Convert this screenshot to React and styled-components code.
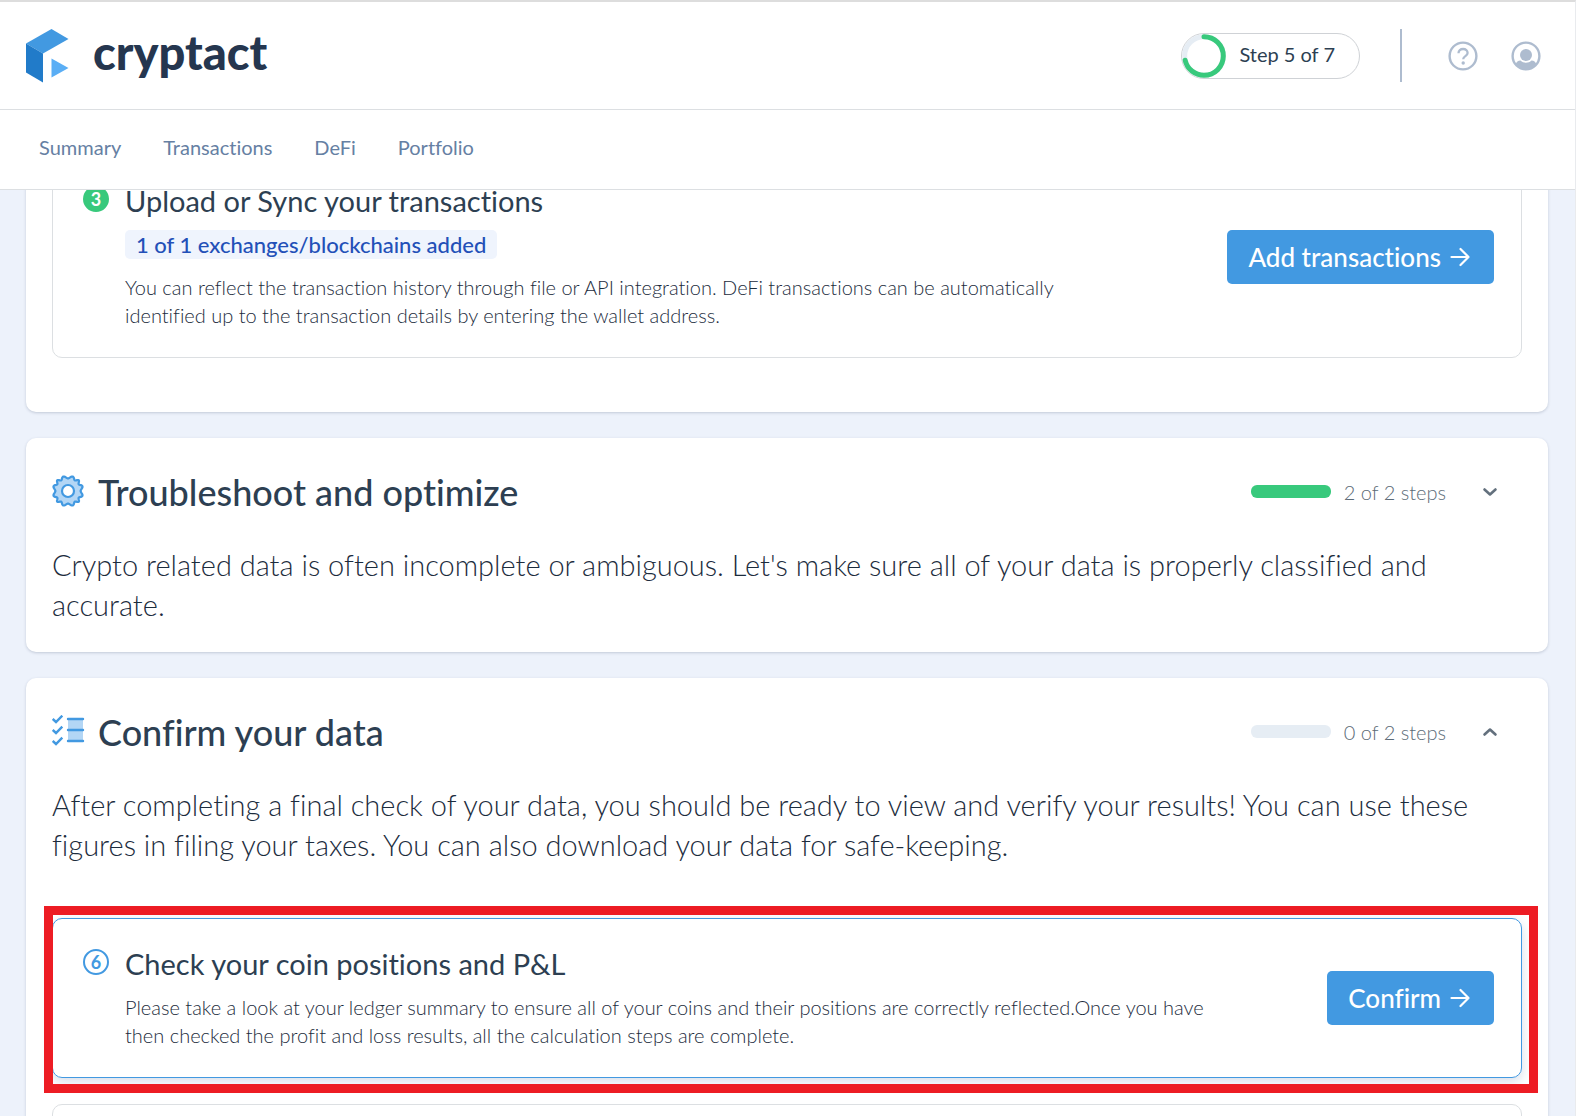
import React from 'react';
import styled, { createGlobalStyle } from 'styled-components';

const color = {
  ink: '#2d3f52',
  body: '#1c2c3d',
  brand: '#25364f',
  nav: '#6680a3',
  muted: '#5c6b77',
  blue: '#4299e1',
  green: '#38c97c',
  track: '#e6edf4',
  line: '#dcdfe2',
  slate: '#aebccf',
  page: '#edf2fb',
};

const GlobalStyle = createGlobalStyle`
  *, *::before, *::after { box-sizing: border-box; }
  html, body { margin: 0; }
  body {
    height: 100vh;
    overflow: hidden;
    background: ${color.page};
    color: ${color.ink};
    font-family: Lato, "Open Sans", "Liberation Sans", sans-serif;
    font-size: 20px;
    font-variant-ligatures: no-common-ligatures;
    line-height: 28px;
  }
  h2, h3, p { margin: 0; }
  button { font: inherit; color: inherit; border: 0; padding: 0; background: none; cursor: pointer; }
  a { color: inherit; text-decoration: none; }
  svg { display: block; flex: none; }
`;

const Page = styled.div`
  display: flex;
  flex-direction: column;
  height: 100vh;
  border-top: 2px solid #dddddd;
  border-right: 1px solid #e9ebee;
`;

const Header = styled.header`
  flex: none;
  display: flex;
  align-items: center;
  justify-content: space-between;
  height: 108px;
  padding: 0 34px 0 26px;
  background: #fff;
  border-bottom: 1px solid ${color.line};
`;

const Brand = styled.a`
  display: flex;
  align-items: center;
  gap: 24px;
`;

const BrandName = styled.span`
  padding-bottom: 8px;
  color: ${color.brand};
  font-size: 47px;
  font-weight: 900;
  line-height: 48px;
`;

const HeaderTools = styled.div`
  display: flex;
  align-items: center;
`;

const StepPill = styled.div`
  display: flex;
  align-items: center;
  gap: 13px;
  height: 46px;
  padding-right: 24px;
  border: 1px solid #cfd2d6;
  border-radius: 23px;
`;

const StepCount = styled.span`
  padding-bottom: 3px;
`;

const Divider = styled.span`
  width: 2px;
  height: 53px;
  margin: 0 46px 0 40px;
  background: ${color.slate};
`;

const IconButton = styled.button`
  display: grid;
  place-items: center;
  & + & { margin-left: 33px; }
`;

const Nav = styled.nav`
  flex: none;
  display: flex;
  align-items: center;
  gap: 42px;
  height: 80px;
  padding: 0 39px 5px;
  background: #fff;
  border-bottom: 1px solid ${color.line};
  color: ${color.nav};
`;

const Main = styled.main`
  flex: 1;
  min-height: 0;
  overflow: hidden;
`;

const CardList = styled.div`
  display: flex;
  flex-direction: column;
  gap: 26px;
  margin-top: -61px;
  padding: 0 27px 0 26px;
`;

const Card = styled.section`
  padding: 26px;
  background: #fff;
  border-radius: 10px;
  box-shadow: 0 1px 3px rgba(40, 60, 90, 0.22);
  ${(p) => p.$hasSteps && 'padding-bottom: 54px;'}
`;

const CardHeader = styled.div`
  display: flex;
  align-items: center;
  height: 55px;
  margin-bottom: 26px;
`;

const CardTitle = styled.h2`
  flex: 1;
  margin-left: 13px;
  font-size: 36px;
  font-weight: 500;
  line-height: 48px;
`;

const ProgressTrack = styled.div`
  width: 80px;
  height: 13px;
  border-radius: 6px;
  background: ${color.track};
  overflow: hidden;
`;

const ProgressFill = styled.div`
  height: 100%;
  background: ${color.green};
`;

const ProgressText = styled.span`
  margin-left: 13px;
  color: ${color.muted};
  font-weight: 300;
`;

const ToggleButton = styled.button`
  display: grid;
  place-items: center;
  width: 26px;
  height: 26px;
  margin: 0 19px 0 31px;
`;

const CardText = styled.p`
  padding-bottom: 1px;
  color: ${color.body};
  font-size: 29px;
  font-weight: 300;
  line-height: 40px;
`;

const StepList = styled.div`
  display: flex;
  flex-direction: column;
  gap: 26px;
  ${(p) => p.$afterText && 'margin-top: 52px;'}
`;

const Step = styled.article`
  position: relative;
  display: flex;
  align-items: center;
  justify-content: space-between;
  gap: 40px;
  min-height: 160px;
  padding: 26px 27px 26px 30px;
  border: 1px solid ${(p) => (p.$active ? color.blue : color.line)};
  border-radius: 10px;
  ${(p) => p.$active && 'box-shadow: 0 4px 12px rgba(60, 90, 150, 0.2);'}
`;

const StepInfo = styled.div`
  display: flex;
  align-items: flex-start;
  gap: 16px;
`;

const Badge = styled.span`
  flex: none;
  display: grid;
  place-items: center;
  width: 26px;
  height: 26px;
  margin-top: 4px;
  border-radius: 50%;
  border: 2px solid ${(p) => (p.$done ? color.green : color.blue)};
  background: ${(p) => (p.$done ? color.green : '#fff')};
  color: ${(p) => (p.$done ? '#fff' : color.blue)};
  font-size: 18px;
  font-weight: 700;
  line-height: 20px;
`;

const StepBody = styled.div`
  display: flex;
  flex-direction: column;
  align-items: flex-start;
`;

const StepTitle = styled.h3`
  margin-bottom: 10px;
  font-size: 29px;
  font-weight: 400;
  line-height: 38px;
`;

const Tag = styled.span`
  margin-bottom: 14px;
  padding: 0 11px;
  border-radius: 5px;
  background: #eff4fd;
  color: #2350b8;
  font-size: 22px;
  font-weight: 500;
  line-height: 29px;
`;

const StepText = styled.p`
  padding-bottom: 2px;
  color: ${color.body};
  font-weight: 300;
`;

const ActionButton = styled.button`
  flex: none;
  display: flex;
  align-items: center;
  gap: 9px;
  height: 54px;
  padding: 0 24px 0 21px;
  border-radius: 5px;
  background: ${color.blue};
  color: #fff;
  font-size: 26px;
  font-weight: 500;
`;

const Highlight = styled.div`
  position: absolute;
  inset: -13px -17px -16px -9px;
  border: 9px solid #ed1c24;
  pointer-events: none;
`;

const LogoMark = () => (
  <svg width="43" height="54" viewBox="0 0 43 54" aria-hidden="true">
    <path d="M0 14.5 25.5 0 42.500 10 17 24.500z" fill="#4299e1" />
    <path d="M0 14.500 17 24.500V53.500L0 43.500z" fill="#217bc9" />
    <path d="M25.500 29.500 42.500 39 25.500 48.500z" fill="#5aaef5" />
  </svg>
);

const ProgressRing = () => (
  <svg width="44" height="44" viewBox="0 0 44 44" fill="none" strokeWidth="5" aria-hidden="true">
    <circle cx="22" cy="22" r="19.300" stroke={color.track} />
    <circle
      cx="22" cy="22" r="19.300" stroke={color.green} strokeLinecap="round"
      pathLength="7" strokeDasharray="5 7" transform="rotate(-90 22 22)"
    />
  </svg>
);

const HelpIcon = () => (
  <svg width="30" height="30" viewBox="0 0 30 30" fill="none" stroke={color.slate} aria-hidden="true">
    <circle cx="15" cy="15" r="13.400" strokeWidth="2.400" />
    <path d="M10.500 12.300c0-2.600 2-4.300 4.600-4.300s4.500 1.700 4.500 4c0 3.200-4.400 3-4.400 6.200" strokeWidth="2.300" />
    <circle cx="15.200" cy="22" r="1.700" fill={color.slate} stroke="none" />
  </svg>
);

const UserIcon = () => (
  <svg width="30" height="30" viewBox="0 0 30 30" aria-hidden="true">
    <circle cx="15" cy="15" r="13.400" fill="none" stroke={color.slate} strokeWidth="2.400" />
    <circle cx="15" cy="14" r="6" fill={color.slate} />
    <path d="M4.500 23.500C5.500 21 7 19.600 9.500 19.600c1.500 1.500 3.400 2.200 5.500 2.200s4-.7 5.500-2.200c2.500 0 4 1.400 5 3.900-5 7-16 7-21 0z" fill={color.slate} />
  </svg>
);

const gearPath = (() => {
  const points = [];
  for (let i = 0; i < 144; i += 1) {
    const angle = (i / 144) * Math.PI * 2;
    const radius = 13.9 - 1.3 * Math.cos(angle * 12 - 0.66 * Math.sin(angle * 4));
    points.push(`${(16 + radius * Math.sin(angle)).toFixed(2)} ${(16 - radius * Math.cos(angle)).toFixed(2)}`);
  }
  return `M${points.join('L')}z`;
})();

const GearIcon = () => (
  <svg width="33" height="33" viewBox="0 0 33 33" stroke={color.blue} strokeWidth="2.200" aria-hidden="true">
    <path d={gearPath} fill="#b3d6f5" strokeLinejoin="round" />
    <circle cx="16" cy="16" r="6" fill="#fff" />
  </svg>
);

const ChecklistIcon = () => (
  <svg width="33" height="33" viewBox="0 0 33 33" fill="none" stroke={color.blue} strokeWidth="2.400" aria-hidden="true">
    <path d="M16 4h15v22H16z" fill="#b3d6f5" stroke="none" />
    <path d="M16 4h15M16 15h15M16 26h15" strokeLinecap="round" />
    <path d="M.7 4 4 7l6.300-6.300M.7 15 4 18l6.300-6.300M.7 26 4 29l6.300-6.300" />
  </svg>
);

const Chevron = ({ up }) => (
  <svg width="16" height="10" viewBox="0 0 16 10" fill="none" stroke="#63707d" strokeWidth="2.600" strokeLinecap="round" strokeLinejoin="round" aria-hidden="true">
    <path d={up ? 'M2.500 7.500 8 2.500l5.500 5' : 'M2.500 2.500 8 7.500l5.500-5'} />
  </svg>
);

const Arrow = () => (
  <svg width="20" height="20" viewBox="0 0 20 20" fill="none" stroke="#fff" strokeWidth="2.200" strokeLinecap="round" strokeLinejoin="round" aria-hidden="true">
    <path d="M1.500 10h17M10.500 2l8 8-8 8" />
  </svg>
);

const SectionHeader = ({ icon, title, done, total, open }) => (
  <CardHeader>
    {icon}
    <CardTitle>{title}</CardTitle>
    <ProgressTrack role="progressbar" aria-label={title} aria-valuenow={done} aria-valuemin={0} aria-valuemax={total}>
      <ProgressFill style={{ width: `${(done / total) * 100}%` }} />
    </ProgressTrack>
    <ProgressText>{done} of {total} steps</ProgressText>
    <ToggleButton type="button" aria-expanded={open} aria-label={`Toggle ${title}`}>
      <Chevron up={open} />
    </ToggleButton>
  </CardHeader>
);

const StepItem = ({ number, title, tag, action, done, active, children }) => (
  <Step $active={active}>
    <StepInfo>
      <Badge $done={done}>{number}</Badge>
      <StepBody>
        <StepTitle>{title}</StepTitle>
        {tag && <Tag>{tag}</Tag>}
        <StepText>{children}</StepText>
      </StepBody>
    </StepInfo>
    <ActionButton type="button">{action}<Arrow /></ActionButton>
    {active && <Highlight />}
  </Step>
);

export default function App() {
  return (
    <>
      <GlobalStyle />
      <Page>
        <Header>
          <Brand href="#"><LogoMark /><BrandName>cryptact</BrandName></Brand>
          <HeaderTools>
            <StepPill><ProgressRing /><StepCount>Step 5 of 7</StepCount></StepPill>
            <Divider />
            <IconButton type="button" aria-label="Help"><HelpIcon /></IconButton>
            <IconButton type="button" aria-label="Account"><UserIcon /></IconButton>
          </HeaderTools>
        </Header>
        <Nav>
          <a href="#summary">Summary</a>
          <a href="#transactions">Transactions</a>
          <a href="#defi">DeFi</a>
          <a href="#portfolio">Portfolio</a>
        </Nav>
        <Main>
          <CardList>
            <Card $hasSteps>
              <StepList>
                <StepItem number={3} title="Upload or Sync your transactions" tag="1 of 1 exchanges/blockchains added" action="Add transactions" done>
                  You can reflect the transaction history through file or API integration. DeFi transactions can be automatically<br />
                  identified up to the transaction details by entering the wallet address.
                </StepItem>
              </StepList>
            </Card>
            <Card>
              <SectionHeader icon={<GearIcon />} title="Troubleshoot and optimize" done={2} total={2} open={false} />
              <CardText>
                Crypto related data is often incomplete or ambiguous. Let's make sure all of your data is properly classified and<br />
                accurate.
              </CardText>
            </Card>
            <Card $hasSteps>
              <SectionHeader icon={<ChecklistIcon />} title="Confirm your data" done={0} total={2} open />
              <CardText>
                After completing a final check of your data, you should be ready to view and verify your results! You can use these<br />
                figures in filing your taxes. You can also download your data for safe-keeping.
              </CardText>
              <StepList $afterText>
                <StepItem number={6} title="Check your coin positions and P&L" action="Confirm" active>
                  Please take a look at your ledger summary to ensure all of your coins and their positions are correctly reflected.Once you have<br />
                  then checked the profit and loss results, all the calculation steps are complete.
                </StepItem>
                <Step />
              </StepList>
            </Card>
          </CardList>
        </Main>
      </Page>
    </>
  );
}
